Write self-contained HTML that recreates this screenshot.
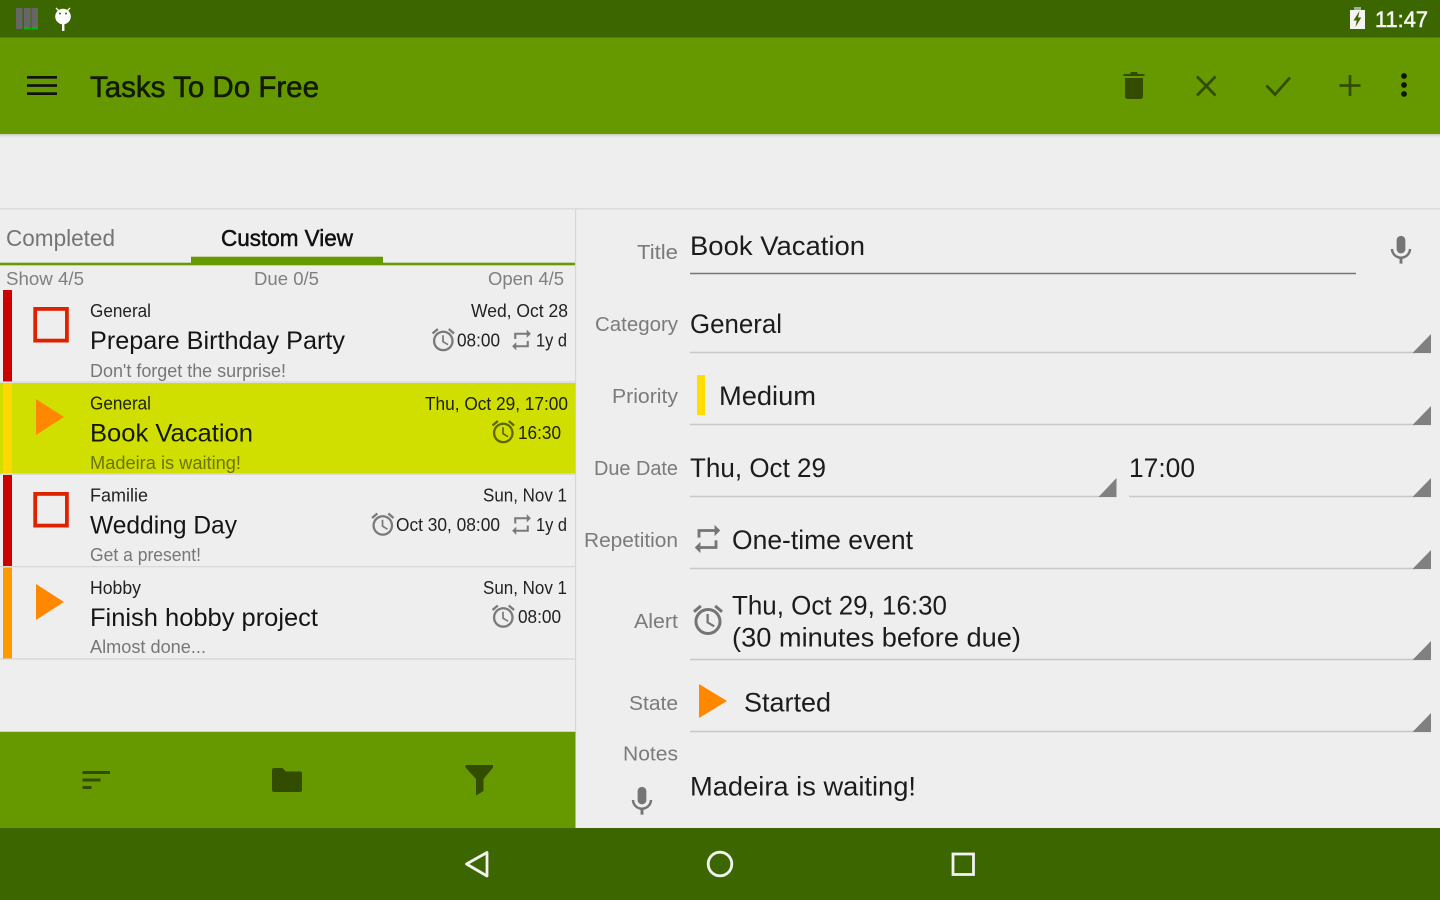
<!DOCTYPE html>
<html><head><meta charset="utf-8"><title>Tasks To Do Free</title>
<style>
html,body{margin:0;padding:0;background:#eee;width:1440px;height:900px;overflow:hidden}
svg{display:block}
text{font-family:"Liberation Sans",sans-serif;white-space:pre}
.lb{font-size:20px;fill:#7b7b7b}
.v{font-size:27px;fill:#1c1c1c}
.s{font-size:18px;fill:#222}
.t{font-size:25px;fill:#151515}
.n{font-size:18px;fill:#777}
.c{font-size:18px;fill:#808080}
.ln{stroke:#c8c8c8;stroke-width:1.6}
.sep{stroke:#d6d6d6;stroke-width:1.2}
</style></head><body>
<svg width="1440" height="900" viewBox="0 0 1440 900" xmlns="http://www.w3.org/2000/svg">
<defs>
<symbol id="clock" viewBox="0 0 24 24"><path d="M22 5.72l-4.6-3.86-1.29 1.53 4.6 3.86L22 5.72zM7.88 3.39L6.6 1.86 2 5.71l1.29 1.53 4.59-3.85zM12.5 8H11v6l4.75 2.85.75-1.23-4-2.37V8zM12 4c-4.97 0-9 4.03-9 9s4.03 9 9 9 9-4.03 9-9-4.03-9-9-9zm0 16c-3.87 0-7-3.13-7-7s3.13-7 7-7 7 3.13 7 7-3.13 7-7 7z"/></symbol>
<symbol id="rep" viewBox="0 0 24 24"><path d="M7 7h10v3l4-4-4-4v3H5v6h2V7zm10 10H7v-3l-4 4 4 4v-3h12v-6h-2v4z"/></symbol>
<symbol id="mic" viewBox="0 0 24 24"><path d="M12 14c1.66 0 2.99-1.34 2.99-3L15 5c0-1.66-1.34-3-3-3S9 3.34 9 5v6c0 1.66 1.34 3 3 3zm5.3-3c0 3-2.54 5.1-5.3 5.1S6.7 14 6.7 11H5c0 3.41 2.72 6.23 6 6.72V21h2v-3.28c3.28-.48 6-3.3 6-6.72h-1.7z"/></symbol>
</defs>
<rect width="1440" height="900" fill="#eeeeee"/>

<!-- status bar -->
<rect width="1440" height="37.500" fill="#3b6600"/>
<g fill="#666"><rect x="16" y="8" width="6.500" height="21"/><rect x="24" y="8" width="6.500" height="21"/><rect x="31.500" y="8" width="6.500" height="21"/></g>
<rect x="24" y="27" width="6.500" height="2.500" fill="#00b800"/><rect x="31.500" y="27" width="6.500" height="2.500" fill="#00b800"/>
<g fill="#fff">
<circle cx="63" cy="16.500" r="7.800"/><rect x="62" y="23" width="2.400" height="8"/>
<path d="M56.500 7.500l3 3-1 1-3-3zM69.500 7.500l-3 3 1 1 3-3z"/>
</g>
<circle cx="60" cy="13.500" r="1" fill="#3b6600"/><circle cx="66" cy="13.500" r="1" fill="#3b6600"/>
<rect x="1354" y="7" width="7" height="3" fill="#9db58a"/>
<rect x="1350" y="10" width="15" height="19" fill="#f4f4f4"/>
<path d="M1359.500 11l-6 9.500h3.200l-1.200 6.500 5.800-9.500h-3.200z" fill="#3b6600"/>
<text x="1375" y="27" font-size="22" fill="#f4f4f4" stroke="#f4f4f4" stroke-width=".55" textLength="53" lengthAdjust="spacingAndGlyphs">11:47</text>

<!-- app bar -->
<rect y="37.500" width="1440" height="96.500" fill="#669900"/>
<rect y="134" width="1440" height="1.500" fill="#cfcfcf"/>
<rect y="135.500" width="1440" height="2" fill="#e4e4e4"/>
<g fill="#111"><rect x="27" y="76" width="30" height="2.700"/><rect x="27" y="84.200" width="30" height="2.700"/><rect x="27" y="92.300" width="30" height="2.700"/></g>
<text x="90" y="97" font-size="30" fill="#121a00" stroke="#121a00" stroke-width=".6" textLength="229" lengthAdjust="spacingAndGlyphs">Tasks To Do Free</text>
<path d="M1125 78h18v18.500a2.500 2.500 0 0 1-2.500 2.500h-13a2.500 2.500 0 0 1-2.500-2.500zM1123.500 74h6.500l1-2h6l1 2h6.500v2h-21z" fill="#334d00"/>
<path d="M1197 76.500l18.500 19M1215.500 76.500l-18.500 19" stroke="#334d00" stroke-width="2.700" fill="none"/>
<path d="M1266.500 85.500l8.500 9 15-17" stroke="#334d00" stroke-width="2.800" fill="none"/>
<path d="M1339.500 85.500h21M1350 75v21" stroke="#334d00" stroke-width="2.700" fill="none"/>
<g fill="#0e1600"><circle cx="1404" cy="76" r="2.900"/><circle cx="1404" cy="85" r="2.900"/><circle cx="1404" cy="94" r="2.900"/></g>

<rect y="208" width="1440" height="1.500" fill="#dcdcdc"/>
<rect x="575" y="209" width="1.200" height="523" fill="#d6d6d6"/>

<!-- tabs -->
<text x="6" y="246" font-size="23" fill="#757575" textLength="109" lengthAdjust="spacingAndGlyphs">Completed</text>
<text x="221" y="246" font-size="23" fill="#111" stroke="#111" stroke-width=".5" textLength="132" lengthAdjust="spacingAndGlyphs">Custom View</text>
<rect y="262.700" width="575" height="2.600" fill="#669900"/>
<rect x="191" y="256.700" width="192" height="8" fill="#669900"/>
<text x="6" y="285" class="c" textLength="78" lengthAdjust="spacingAndGlyphs">Show 4/5</text>
<text x="254" y="285" class="c" textLength="65" lengthAdjust="spacingAndGlyphs">Due 0/5</text>
<text x="488" y="285" class="c" textLength="76" lengthAdjust="spacingAndGlyphs">Open 4/5</text>

<!-- row 1 -->
<rect x="3" y="290" width="9" height="91.500" fill="#cc0000"/>
<rect x="35.200" y="308.900" width="31.700" height="31.700" fill="none" stroke="#dd2200" stroke-width="3.800"/>
<text x="90" y="317" class="s" textLength="61" lengthAdjust="spacingAndGlyphs">General</text>
<text x="90" y="349" class="t" textLength="255" lengthAdjust="spacingAndGlyphs">Prepare Birthday Party</text>
<text x="90" y="377" class="n" textLength="196" lengthAdjust="spacingAndGlyphs">Don't forget the surprise!</text>
<text x="471" y="317" class="s" textLength="97" lengthAdjust="spacingAndGlyphs">Wed, Oct 28</text>
<use href="#clock" x="429.500" y="326" width="27.600" height="27.600" fill="#7a7a7a"/>
<text x="457" y="346.500" class="s" textLength="43" lengthAdjust="spacingAndGlyphs">08:00</text>
<use href="#rep" x="509" y="327.500" width="25" height="25" fill="#7a7a7a"/>
<text x="536" y="346.500" class="s" textLength="31" lengthAdjust="spacingAndGlyphs">1y d</text>
<line x1="0" x2="575" y1="382" y2="382" class="sep"/>

<!-- row 2 selected -->
<rect x="0" y="383" width="575.500" height="90.500" fill="#d0df00"/>
<rect x="3" y="383" width="9" height="90.500" fill="#ffd800"/>
<path d="M36 399l28 18-28 18z" fill="#ff8800"/>
<text x="90" y="409.500" class="s" style="fill:#1c2000" textLength="61" lengthAdjust="spacingAndGlyphs">General</text>
<text x="90" y="441.500" class="t" style="fill:#151800" textLength="163" lengthAdjust="spacingAndGlyphs">Book Vacation</text>
<text x="90" y="469" class="n" style="fill:#6c7400" textLength="151" lengthAdjust="spacingAndGlyphs">Madeira is waiting!</text>
<text x="425" y="410" class="s" style="fill:#1c2000" textLength="143" lengthAdjust="spacingAndGlyphs">Thu, Oct 29, 17:00</text>
<use href="#clock" x="489.500" y="418" width="27.600" height="27.600" fill="#5f6600"/>
<text x="518" y="439" class="s" style="fill:#1c2000" textLength="43" lengthAdjust="spacingAndGlyphs">16:30</text>
<line x1="0" x2="575" y1="474.300" y2="474.300" class="sep"/>

<!-- row 3 -->
<rect x="3" y="475" width="9" height="91" fill="#cc0000"/>
<rect x="35.200" y="493.900" width="31.700" height="31.700" fill="none" stroke="#dd2200" stroke-width="3.800"/>
<text x="90" y="501.500" class="s" textLength="58" lengthAdjust="spacingAndGlyphs">Familie</text>
<text x="90" y="533.500" class="t" textLength="147" lengthAdjust="spacingAndGlyphs">Wedding Day</text>
<text x="90" y="561" class="n" textLength="111" lengthAdjust="spacingAndGlyphs">Get a present!</text>
<text x="483" y="501.500" class="s" textLength="84" lengthAdjust="spacingAndGlyphs">Sun, Nov 1</text>
<use href="#clock" x="369" y="510.500" width="27.600" height="27.600" fill="#7a7a7a"/>
<text x="396" y="531" class="s" textLength="104" lengthAdjust="spacingAndGlyphs">Oct 30, 08:00</text>
<use href="#rep" x="509" y="512" width="25" height="25" fill="#7a7a7a"/>
<text x="536" y="531" class="s" textLength="31" lengthAdjust="spacingAndGlyphs">1y d</text>
<line x1="0" x2="575" y1="566.700" y2="566.700" class="sep"/>

<!-- row 4 -->
<rect x="3" y="567.500" width="9" height="91" fill="#ff9900"/>
<path d="M36 584l28 18-28 18z" fill="#ff8800"/>
<text x="90" y="594" class="s" textLength="51" lengthAdjust="spacingAndGlyphs">Hobby</text>
<text x="90" y="626" class="t" textLength="228" lengthAdjust="spacingAndGlyphs">Finish hobby project</text>
<text x="90" y="653" class="n" textLength="116" lengthAdjust="spacingAndGlyphs">Almost done...</text>
<text x="483" y="594" class="s" textLength="84" lengthAdjust="spacingAndGlyphs">Sun, Nov 1</text>
<use href="#clock" x="489.500" y="602.500" width="27.600" height="27.600" fill="#7a7a7a"/>
<text x="518" y="623" class="s" textLength="43" lengthAdjust="spacingAndGlyphs">08:00</text>
<line x1="0" x2="575" y1="659" y2="659" class="sep"/>

<!-- bottom toolbar -->
<rect y="731" width="576" height="1.500" fill="#d2d2d2"/>
<rect y="732" width="575.500" height="96" fill="#669900"/>
<g fill="#334d00"><rect x="82.500" y="771" width="27.500" height="3"/><rect x="82.500" y="778.500" width="18" height="3"/><rect x="82.500" y="786" width="9" height="3"/></g>
<path d="M274 768h8.500l3.500 3.500h14a2 2 0 0 1 2 2V790a2 2 0 0 1-2 2h-26a2 2 0 0 1-2-2V770a2 2 0 0 1 2-2z" fill="#334d00"/>
<path d="M465.500 765h27.500v2.500l-9.500 11.500v12l-7.500 4.500v-16.500l-10.500-11.500z" fill="#334d00"/>

<!-- right panel labels -->
<g text-anchor="start">
<text x="637" y="259" class="lb" textLength="41" lengthAdjust="spacingAndGlyphs">Title</text>
<text x="595" y="331" class="lb" textLength="83" lengthAdjust="spacingAndGlyphs">Category</text>
<text x="612" y="403" class="lb" textLength="66" lengthAdjust="spacingAndGlyphs">Priority</text>
<text x="594" y="475" class="lb" textLength="84" lengthAdjust="spacingAndGlyphs">Due Date</text>
<text x="584" y="547" class="lb" textLength="94" lengthAdjust="spacingAndGlyphs">Repetition</text>
<text x="634" y="628" class="lb" textLength="44" lengthAdjust="spacingAndGlyphs">Alert</text>
<text x="629" y="710" class="lb" textLength="49" lengthAdjust="spacingAndGlyphs">State</text>
<text x="623" y="760.500" class="lb" textLength="55" lengthAdjust="spacingAndGlyphs">Notes</text>
</g>

<text x="690" y="255" class="v" textLength="175" lengthAdjust="spacingAndGlyphs">Book Vacation</text>
<line x1="690" x2="1356" y1="273.500" y2="273.500" stroke="#757575" stroke-width="1.500"/>
<use href="#mic" x="1383.500" y="233" width="35" height="35" fill="#757575"/>

<text x="690" y="333" class="v" textLength="92" lengthAdjust="spacingAndGlyphs">General</text>
<line x1="690" x2="1431" y1="352.500" y2="352.500" class="ln"/>
<path d="M1431 334v19h-18.500z" fill="#808080"/>

<rect x="697" y="375" width="8" height="40" fill="#ffdd00"/>
<text x="719" y="405" class="v" textLength="97" lengthAdjust="spacingAndGlyphs">Medium</text>
<line x1="690" x2="1431" y1="424.500" y2="424.500" class="ln"/>
<path d="M1431 406v19h-18.500z" fill="#808080"/>

<text x="690" y="477" class="v" textLength="136" lengthAdjust="spacingAndGlyphs">Thu, Oct 29</text>
<line x1="690" x2="1116.500" y1="496.500" y2="496.500" class="ln"/>
<path d="M1116.500 478v19h-18z" fill="#808080"/>
<text x="1129" y="477" class="v" textLength="66" lengthAdjust="spacingAndGlyphs">17:00</text>
<line x1="1129" x2="1431" y1="496.500" y2="496.500" class="ln"/>
<path d="M1431 478v19h-18.500z" fill="#808080"/>

<use href="#rep" x="690.500" y="522" width="34" height="34" fill="#757575"/>
<text x="732" y="549" class="v" textLength="181" lengthAdjust="spacingAndGlyphs">One-time event</text>
<line x1="690" x2="1431" y1="568.500" y2="568.500" class="ln"/>
<path d="M1431 550v19h-18.500z" fill="#808080"/>

<use href="#clock" x="690" y="602" width="36" height="36" fill="#757575"/>
<text x="732" y="614.500" class="v" textLength="215" lengthAdjust="spacingAndGlyphs">Thu, Oct 29, 16:30</text>
<text x="732" y="646.500" class="v" textLength="289" lengthAdjust="spacingAndGlyphs">(30 minutes before due)</text>
<line x1="690" x2="1431" y1="659.500" y2="659.500" class="ln"/>
<path d="M1431 641v19h-18.500z" fill="#808080"/>

<path d="M699 684l28 17-28 17z" fill="#ff8800"/>
<text x="744" y="711.500" class="v" textLength="87" lengthAdjust="spacingAndGlyphs">Started</text>
<line x1="690" x2="1431" y1="731.500" y2="731.500" class="ln"/>
<path d="M1431 713v19h-18.500z" fill="#808080"/>

<use href="#mic" x="624.500" y="784" width="35" height="35" fill="#757575"/>
<text x="690" y="795.500" class="v" textLength="226" lengthAdjust="spacingAndGlyphs">Madeira is waiting!</text>

<!-- nav bar -->
<rect y="828" width="1440" height="72" fill="#3b6600"/>
<path d="M487 852.500v23.500l-20.500-12z" fill="none" stroke="#f2f2f2" stroke-width="2.800" stroke-linejoin="round"/>
<circle cx="720" cy="864" r="11.800" fill="none" stroke="#f2f2f2" stroke-width="2.800"/>
<rect x="953" y="854" width="20.500" height="20.500" fill="none" stroke="#f2f2f2" stroke-width="2.800"/>
</svg>
</body></html>
